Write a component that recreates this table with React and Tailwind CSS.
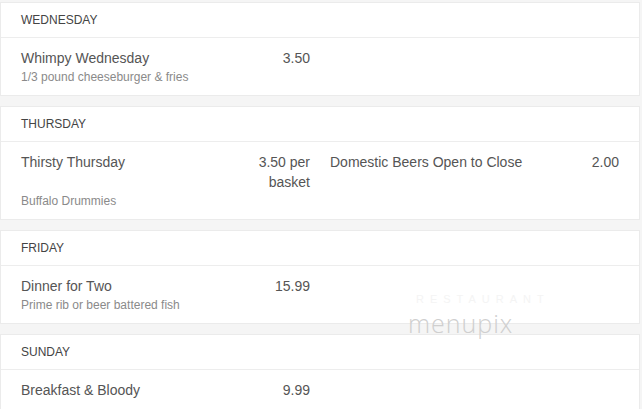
const sections = [
  {
    day: 'WEDNESDAY',
    items: [{ name: 'Whimpy Wednesday', price: '3.50', desc: '1/3 pound cheeseburger & fries' }],
  },
  {
    day: 'THURSDAY',
    items: [
      { name: 'Thirsty Thursday', price: '3.50 per basket', desc: 'Buffalo Drummies' },
      { name: 'Domestic Beers Open to Close', price: '2.00' },
    ],
  },
  {
    day: 'FRIDAY',
    items: [{ name: 'Dinner for Two', price: '15.99', desc: 'Prime rib or beer battered fish' }],
  },
  {
    day: 'SUNDAY',
    items: [{ name: 'Breakfast & Bloody', price: '9.99' }],
  },
]

function MenuItem({ item }) {
  return (
    <div className="w-1/2 px-[10px]">
      <div className="flex gap-3">
        <div className="flex-1 text-[14px] leading-5 text-[#555]">{item.name}</div>
        <div className="w-[60px] text-right text-[14px] leading-5 text-[#555]">{item.price}</div>
      </div>
      {item.desc ? (
        <div className="text-[12px] leading-[18px] text-[#8a8a8a]">{item.desc}</div>
      ) : null}
    </div>
  )
}

export default function App() {
  return (
    <div
      className="relative h-[409px] w-[642px] overflow-hidden bg-[#f5f5f5] pt-[2px]"
      style={{ fontFamily: '"Liberation Sans", Arial, sans-serif' }}
    >
      <div className="flex w-[640px] flex-col gap-[10px]">
        {sections.map((s) => (
          <section key={s.day} className="border border-[#ebebeb] bg-white">
            <div className="flex h-[35px] items-center border-b border-[#ededed] px-5 text-[12px] text-[#444]">
              {s.day}
            </div>
            <div className="flex px-[10px] pt-[10px] pb-[9px]">
              {s.items.map((item) => (
                <MenuItem key={item.name} item={item} />
              ))}
            </div>
          </section>
        ))}
      </div>

      <div className="pointer-events-none absolute left-[408px] top-[291px] flex flex-col items-start">
        <span className="ml-[8px] text-[11px] tracking-[6px] text-[#f4f4f4]">RESTAURANT</span>
        <span
          className="text-[25px] font-light leading-[30px] tracking-[1px] text-[#cfcfcf]"
          style={{ fontFamily: '"Open Sans", sans-serif', fontWeight: 300 }}
        >
          menupix
        </span>
      </div>
    </div>
  )
}
